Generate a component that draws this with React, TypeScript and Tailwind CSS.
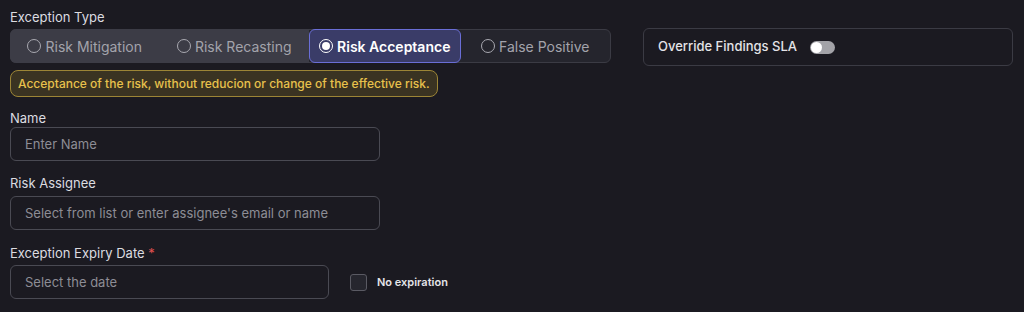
import React, { useState } from 'react';

const options = [
  { id: 'mitigation', label: 'Risk Mitigation' },
  { id: 'recasting', label: 'Risk Recasting' },
  { id: 'acceptance', label: 'Risk Acceptance' },
  { id: 'false', label: 'False Positive' },
];

function Radio({ checked }: { checked: boolean }) {
  return checked ? (
    <span className="flex h-[14px] w-[14px] items-center justify-center rounded-full border-[1.5px] border-white">
      <span className="h-[8px] w-[8px] rounded-full bg-white" />
    </span>
  ) : (
    <span className="h-[14px] w-[14px] rounded-full border-[1.5px] border-[#a9a9b1]" />
  );
}

export default function App() {
  const [selected, setSelected] = useState('acceptance');
  const [override, setOverride] = useState(false);
  const [noExpiry, setNoExpiry] = useState(false);

  const selectedIndex = options.findIndex(o => o.id === selected);

  return (
    <div
      className="min-h-[312px] w-[1024px] bg-[#1b1a21] px-[10px] pt-[8px] text-[13px] text-[#dcdce0]"
      style={{ fontFamily: 'Inter, "Noto Sans", sans-serif' }}
    >
      <div className="leading-[18px]">Exception Type</div>

      <div className="mt-[3px] flex h-[34px] items-start">
        <div className="flex h-[34px] w-[601px] rounded-md border border-[#3b3b44] bg-[#25252d]">
          {options.map((o, i) => {
            const isSel = o.id === selected;
            const before = i < selectedIndex;
            return (
              <button
                key={o.id}
                type="button"
                onClick={() => setSelected(o.id)}
                className={`-my-px flex h-[34px] flex-1 items-center justify-center gap-[4px] text-[14px] ${
                  i === 0 ? '-ml-px rounded-l-md' : ''
                } ${
                  isSel
                    ? 'rounded-md border border-[#6a6ed6] bg-[#3a3c68] font-semibold text-white'
                    : before
                    ? 'bg-[#3c3c46] text-[#a3a3ab]'
                    : 'text-[#a3a3ab]'
                }`}
              >
                <Radio checked={isSel} />
                <span>{o.label}</span>
              </button>
            );
          })}
        </div>

        <div className="-mt-px ml-[32px] flex h-[38px] w-[370px] shrink-0 items-center rounded-md border border-[#3b3b44] px-[14px]">
          <span className="font-medium text-[#e4e4e8]">Override Findings SLA</span>
          <button
            type="button"
            onClick={() => setOverride(!override)}
            className={`ml-[13px] flex h-[13px] w-[25px] items-center rounded-full px-px ${
              override ? 'justify-end bg-[#6a6ed6]' : 'bg-[#a3a3a8]'
            }`}
          >
            <span className="h-[11px] w-[11px] rounded-full bg-white" />
          </button>
        </div>
      </div>

      <div className="mt-[7px] inline-flex h-[27px] items-center rounded-lg border border-[#9c8536] bg-[#3a3322] px-[7px] text-[12px] font-medium text-[#e8c14c]">
        Acceptance of the risk, without reducion or change of the effective risk.
      </div>

      <div className="mt-[13px]">
        <div className="mb-[1px] leading-[16px]">Name</div>
        <input
          placeholder="Enter Name"
          className="h-[34px] w-[370px] rounded-md border border-[#4a4a53] bg-transparent px-[14px] text-[13px] text-[#dcdce0] outline-none placeholder:text-[#8d8d95]"
        />
      </div>

      <div className="mt-[14px]">
        <div className="mb-[5px] leading-[16px]">Risk Assignee</div>
        <input
          placeholder="Select from list or enter assignee's email or name"
          className="h-[34px] w-[370px] rounded-md border border-[#4a4a53] bg-transparent px-[14px] text-[13px] text-[#dcdce0] outline-none placeholder:text-[#8d8d95]"
        />
      </div>

      <div className="mt-[15px]">
        <div className="mb-[4px] leading-[16px]">
          Exception Expiry Date <span className="text-[#e0504f]">*</span>
        </div>
        <div className="flex items-center">
          <input
            placeholder="Select the date"
            className="h-[34px] w-[319px] rounded-md border border-[#4a4a53] bg-transparent px-[14px] text-[13px] text-[#dcdce0] outline-none placeholder:text-[#8d8d95]"
          />
          <label className="ml-[21px] flex cursor-pointer items-center gap-[10px]">
            <button
              type="button"
              onClick={() => setNoExpiry(!noExpiry)}
              className={`h-[17px] w-[17px] rounded-[3px] border border-[#5a5a63] ${
                noExpiry ? 'bg-[#6a6ed6]' : 'bg-[#26262e]'
              }`}
            />
            <span className="text-[11px] font-semibold text-[#e4e4e8]">No expiration</span>
          </label>
        </div>
      </div>
    </div>
  );
}
